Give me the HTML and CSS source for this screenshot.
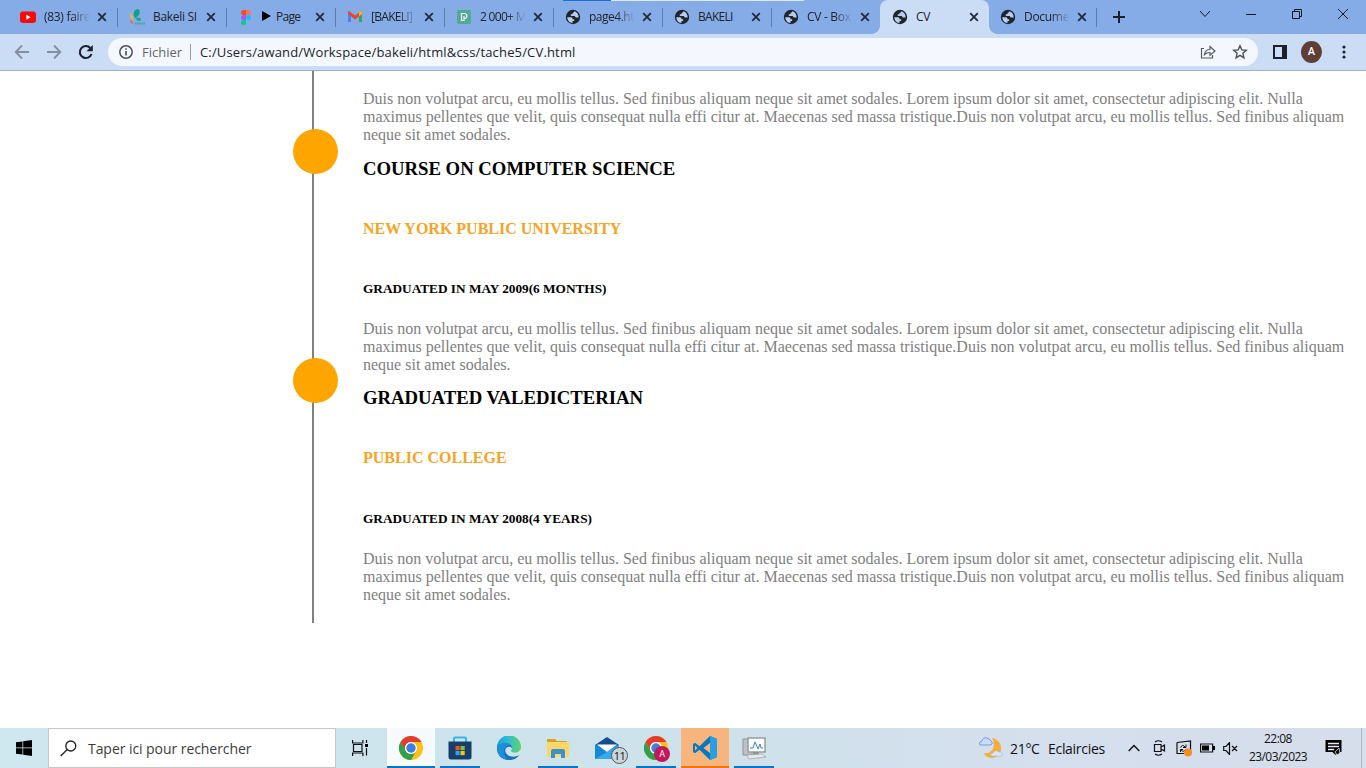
FILE: index.html
```html
<!DOCTYPE html>
<html lang="fr">
<head>
<meta charset="utf-8">
<title>CV</title>
<link rel="stylesheet" href="styles.css">
</head>
<body>
<svg class="defs" width="0" height="0">
  <symbol id="close" viewBox="0 0 16 16"><path d="M4.200 4.200l7.600 7.600M11.800 4.200l-7.600 7.600" stroke="#202a3c" stroke-width="1.800" fill="none"/></symbol>
  <symbol id="globe" viewBox="0 0 16 16"><circle cx="8" cy="8" r="7.200" fill="#20242b"/><path d="M2.300 8.200h3.500c1.700 0 1.700 1.200 1.700 2h1.700v1.700H7.500v2C4.500 13.900 2.300 11 2.300 8.200zM9.200 2.300c-.2 1.200-.7 1.700-1.700 1.700v1.200H5.800v1.700h3.500c1 0 1 1.700 2 1.700h2.400C13.700 5.500 12 3 9.200 2.300z" fill="#b7cdf1"/></symbol>
  <symbol id="chrome" viewBox="0 0 24 24"><circle cx="12" cy="12" r="12" fill="#fbc116"/><path d="M1.600 6A12 12 0 0 1 22.400 6H12a6 6 0 0 0-5.200 9z" fill="#e33b2e"/><path d="M1.600 6A12 12 0 0 0 12 24l5.200-9A6 6 0 0 1 6.800 15z" fill="#2da14c"/><circle cx="12" cy="12" r="6" fill="#fff"/><circle cx="12" cy="12" r="4.700" fill="#3c7de8"/></symbol>
</svg>

<header class="tabstrip">
  <div class="window-edge"></div>
  <div class="tab"><svg class="fav" viewBox="0 0 16 16"><rect y="2.500" width="16" height="11.500" rx="3" fill="#f80b0b"/><path d="M6.400 5.700v5l4.300-2.500z" fill="#fff"/></svg><span class="title t-faire">(83) faire</span><svg class="x"><use href="#close"/></svg></div>
  <div class="tab"><svg class="fav" viewBox="0 0 16 16"><path d="M6 9C3 5 5 0 9.500 0c2.500 3 1 7-3.500 9z" fill="#12a08a"/><path d="M6.500 9.500c3-2 6-.5 5.500 2-2 1-4 .5-5.500-2z" fill="#1ca591"/><path d="M1 4c3 1 4 4 3 8-2-2-4-5-3-8z" fill="#d9b55b"/><path d="M1 11c2 0 3 2 3 4-2 0-3-2-3-4z" fill="#e2694e"/><path d="M6 14.500h10" stroke="#42a699" stroke-width="2" stroke-dasharray="1.500 .6"/></svg><span class="title t-bakeli">Bakeli SI</span><svg class="x"><use href="#close"/></svg></div>
  <div class="tab"><svg class="fav" viewBox="0 0 16 16"><path d="M8 1H5.500a2.500 2.500 0 0 0 0 5H8z" fill="#f24e1e"/><path d="M8 1h2.500a2.500 2.500 0 0 1 0 5H8z" fill="#ff7262"/><path d="M8 6H5.500a2.500 2.500 0 0 0 0 5H8z" fill="#a259ff"/><circle cx="10.500" cy="8.500" r="2.500" fill="#1abcfe"/><path d="M8 11H5.500A2.500 2.500 0 1 0 8 13.500z" fill="#0acf83"/></svg><span class="title t-page"><svg class="play" viewBox="0 0 9 10"><path d="M0 0v10l9-5z"/></svg>Page</span><svg class="x"><use href="#close"/></svg></div>
  <div class="tab"><svg class="fav" viewBox="0 0 16 16"><path d="M1 4v9h3V6z" fill="#4285f4"/><path d="M12 6v7h3V4z" fill="#34a853"/><path d="M1 3.500c0-1 1-1.500 2-.8L8 6.500l5-3.800c1-.7 2-.2 2 .8V5L8 10.400 1 5z" fill="#ea4335"/><path d="M12 3.500l1-.8c1-.7 2-.2 2 .8V5l-3 2.300z" fill="#fbbc04"/></svg><span class="title t-mail">[BAKELI]</span><svg class="x"><use href="#close"/></svg></div>
  <div class="tab"><svg class="fav" viewBox="0 0 16 16"><rect x="1" y="1" width="14" height="14" rx="1.500" fill="#51ad92"/><path d="M5.500 4.500h3.500a2.600 2.600 0 0 1 0 5H8v2H5.500zM8 9.500V7" stroke="#fff" stroke-width="1.200" fill="none"/></svg><span class="title t-2000">2 000+ M</span><svg class="x"><use href="#close"/></svg></div>
  <div class="tab"><svg class="fav"><use href="#globe"/></svg><span class="title t-page4">page4.ht</span><svg class="x"><use href="#close"/></svg></div>
  <div class="tab"><svg class="fav"><use href="#globe"/></svg><span class="title t-bk">BAKELI</span><svg class="x"><use href="#close"/></svg></div>
  <div class="tab before-active"><svg class="fav"><use href="#globe"/></svg><span class="title t-box">CV - Box</span><svg class="x"><use href="#close"/></svg></div>
  <div class="tab active"><svg class="fav"><use href="#globe"/></svg><span class="title t-cv">CV</span><svg class="x"><use href="#close"/></svg></div>
  <div class="tab last"><svg class="fav"><use href="#globe"/></svg><span class="title t-doc">Docume</span><svg class="x"><use href="#close"/></svg></div>
  <svg class="plus" viewBox="0 0 12 12"><path d="M6 0v12M0 6h12" stroke="#1b212c" stroke-width="2"/></svg>
  <div class="controls">
    <svg viewBox="0 0 12 12"><path d="M1 3l5 5.500L11 3"/></svg>
    <svg viewBox="0 0 12 12"><path d="M1 6.500h10"/></svg>
    <svg viewBox="0 0 12 12"><path d="M1.500 3.500h7v7h-7zM3.500 3V1.500h7v7H9"/></svg>
    <svg viewBox="0 0 12 12"><path d="M1 1l10 10M11 1L1 11"/></svg>
  </div>
</header>

<nav class="toolbar">
  <svg class="nav-icon" viewBox="0 0 16 16"><path d="M15 8H2M8 1.500L1.700 8 8 14.500" stroke="#838fa3" stroke-width="1.800" fill="none"/></svg>
  <svg class="nav-icon" viewBox="0 0 16 16"><path d="M1 8h13M8 1.500L14.300 8 8 14.500" stroke="#838fa3" stroke-width="1.800" fill="none"/></svg>
  <svg class="nav-icon" viewBox="0 0 16 16"><path d="M13.500 10A6 6 0 1 1 12.300 4" stroke="#1b212c" stroke-width="2.100" fill="none"/><path d="M14.800 1v6.300H8.500z" fill="#1b212c"/></svg>
  <div class="omnibox">
    <svg class="info" viewBox="0 0 14 14"><circle cx="7" cy="7" r="6.200" stroke="#4d5159" stroke-width="1.500" fill="none"/><path d="M7 6v4.500M7 3.200v1.600" stroke="#4d5159" stroke-width="1.600"/></svg>
    <span class="scheme">Fichier</span>
    <span class="divider"></span>
    <span class="url">C:/Users/awand/Workspace/bakeli/html&amp;css/tache5/CV.html</span>
    <svg class="share" viewBox="0 0 16 16"><path d="M4 4.500H1.500v9.500h11v-3M4.500 10.500c.5-3.500 2.500-5 5.500-5V2.500l5 4.500-5 4.300V8.500c-2.500 0-4 .5-5.500 2z"/></svg>
    <svg class="star" viewBox="0 0 16 16"><path d="M8 1.800l1.800 4.100 4.500.4-3.400 3 1 4.400L8 11.400l-3.900 2.300 1-4.400-3.400-3 4.500-.4z"/></svg>
  </div>
  <svg class="panel" viewBox="0 0 14 14"><rect x="1" y="1" width="12" height="12" fill="none" stroke="#1b212c" stroke-width="2"/><path d="M9 1h4v12H9z" fill="#1b212c"/></svg>
  <span class="avatar">A</span>
  <svg class="menu" viewBox="0 0 4 14"><circle cx="2" cy="2" r="1.600"/><circle cx="2" cy="7" r="1.600"/><circle cx="2" cy="12" r="1.600"/></svg>
</nav>

<main class="page">
  <section class="timeline">
    <article class="entry first">
      <p>Duis non volutpat arcu, eu mollis tellus. Sed finibus aliquam neque sit amet sodales. Lorem ipsum dolor sit amet, consectetur adipiscing elit. Nulla<br>maximus pellentes que velit, quis consequat nulla effi citur at. Maecenas sed massa tristique.Duis non volutpat arcu, eu mollis tellus. Sed finibus aliquam<br>neque sit amet sodales.</p>
    </article>
    <article class="entry">
      <span class="dot"></span>
      <h3>COURSE ON COMPUTER SCIENCE</h3>
      <h4>NEW YORK PUBLIC UNIVERSITY</h4>
      <h5>GRADUATED IN MAY 2009(6 MONTHS)</h5>
      <p>Duis non volutpat arcu, eu mollis tellus. Sed finibus aliquam neque sit amet sodales. Lorem ipsum dolor sit amet, consectetur adipiscing elit. Nulla<br>maximus pellentes que velit, quis consequat nulla effi citur at. Maecenas sed massa tristique.Duis non volutpat arcu, eu mollis tellus. Sed finibus aliquam<br>neque sit amet sodales.</p>
    </article>
    <article class="entry">
      <span class="dot"></span>
      <h3>GRADUATED VALEDICTERIAN</h3>
      <h4>PUBLIC COLLEGE</h4>
      <h5 class="late">GRADUATED IN MAY 2008(4 YEARS)</h5>
      <p>Duis non volutpat arcu, eu mollis tellus. Sed finibus aliquam neque sit amet sodales. Lorem ipsum dolor sit amet, consectetur adipiscing elit. Nulla<br>maximus pellentes que velit, quis consequat nulla effi citur at. Maecenas sed massa tristique.Duis non volutpat arcu, eu mollis tellus. Sed finibus aliquam<br>neque sit amet sodales.</p>
    </article>
  </section>
</main>

<footer class="taskbar">
  <div class="start"><svg width="16" height="16" viewBox="0 0 16 16"><path d="M0 2.300l6.500-.9v6.200H0zM7.200 1.300L16 0v7.600H7.200zM0 8.300h6.500v6.300L0 13.700zM7.200 8.300H16V16l-8.800-1.300z"/></svg></div>
  <div class="search"><svg width="17" height="17" viewBox="0 0 17 17"><circle cx="10.800" cy="6" r="5" fill="none" stroke="#222" stroke-width="1.300"/><path d="M7.200 9.500L.7 16" stroke="#222" stroke-width="1.300"/></svg><span>Taper ici pour rechercher</span></div>
  <div class="taskview"><svg width="17" height="16" viewBox="0 0 17 16"><path d="M.6 0v3h10.300V0M.6 16v-3h10.300v3M1.500 4.500h8.500v7H1.500zM14.500 0v3M14.500 8v7.500" stroke="#111" stroke-width="1.200" fill="none"/><path d="M13 4h3v3h-3z"/></svg></div>
  <div class="app chrome-app"><svg width="24" height="24"><use href="#chrome"/></svg></div>
  <div class="app"><svg width="24" height="24" viewBox="0 0 24 24"><path d="M6 6V2.500Q6 1.500 7 1.500h10q1 0 1 1V6" stroke="#35b7e9" stroke-width="2" fill="none"/><path d="M.5 5.500h23V21q0 2.500-2.500 2.500H3Q.5 23.500.5 21z" fill="#173f69"/><path d="M7.500 10h4.200v4.200H7.500z" fill="#f15325"/><path d="M12.500 10h4.200v4.200h-4.200z" fill="#80c12f"/><path d="M7.500 15h4.200v4.200H7.500z" fill="#22a7f0"/><path d="M12.500 15h4.200v4.200h-4.200z" fill="#ffc01e"/></svg></div>
  <div class="app idle"><svg width="24" height="24" viewBox="0 0 24 24"><defs><linearGradient id="edge"><stop stop-color="#1c9fe0"/><stop offset=".5" stop-color="#33bfcf"/><stop offset="1" stop-color="#61d45c"/></linearGradient></defs><path d="M0 11.500A12 12 0 0 1 24 11c0 3.500-2.500 5.500-6 5.500-2.500 0-4-.8-4-1.600 0-.7 1-1 1-2.800C15 9 12.500 6.700 9 6.700c-4.500 0-8 2.300-9 4.800z" fill="url(#edge)"/><path d="M0 12c0-3 4-5.300 8.500-5.300 4 0 6.500 2.500 6.500 5.300-1.500-1.500-3.500-1.700-5-.8-2.500 1.600-2.500 5.800 1 8 3.500 2.200 8 1.700 11.300-.3C20.500 22 16.500 24 12 24 5 24 0 19 0 12z" fill="#1672bd"/><path d="M0 12c0-3 4-5.300 8.500-5.300 2.500 0 4.300.9 5.300 2.300C7 8 4.500 17 10.500 23.900 4.500 23.300 0 18.500 0 12z" fill="#1b8fd9"/></svg></div>
  <div class="app"><svg width="24" height="24" viewBox="0 0 24 24"><path d="M1 3h8l2 2h10v5H1z" fill="#d6a128"/><path d="M1 6h22v15H1z" fill="#fcd667"/><path d="M5 22v-7q0-2 2-2h10q2 0 2 2v7h-4v-4H9v4z" fill="#3c91cc"/></svg></div>
  <div class="app idle mail"><svg width="26" height="24" viewBox="0 0 26 24"><path d="M1 9l12-8 12 8z" fill="#124f8c"/><path d="M1 9h24v14H1z" fill="#1688d6"/><path d="M3 8.500h20L13 16z" fill="#fff"/><path d="M1 23L25 9v14z" fill="#35a9e9"/></svg><span class="badge">11</span></div>
  <div class="app profile"><svg width="24" height="24"><use href="#chrome"/></svg><span class="badge">A</span></div>
  <div class="app code"><svg width="24" height="24" viewBox="0 0 24 24"><path d="M17 0l7 3v18l-7 3L6.500 13.800 2 17.300 0 16V8l2-1.300 4.500 3.500zM17 7l-6.500 5 6.500 5z" fill="#0877bb"/><path d="M17 0l7 3v18l-7 3z" fill="#25a0e4"/><path d="M2 9.500v5l2.500-2.500z" fill="#f7b57d"/></svg></div>
  <div class="app"><svg width="25" height="24" viewBox="0 0 25 24"><path d="M1 3h9v16H1z" fill="#bcc2c5" stroke="#8c9295"/><path d="M6 2h17v14H6z" fill="#fff" stroke="#969da0" stroke-width="1.500"/><path d="M8 12h3l2-6 3 7 2-5 1 4h2" fill="none" stroke="#3688b1"/><path d="M11 16h6v3h-6z" fill="#8e969a"/><path d="M5 19l15-1 4 3-17 2z" fill="#e7eaeb" stroke="#9ba1a3" stroke-width=".7"/></svg></div>
  <div class="tray">
    <svg class="weather" width="25" height="24" viewBox="0 0 25 24"><path d="M14 2c6 1 10 6 9 12-1 7-9 10-15 6-1-1-2-2-2-3 7 2 13-6 8-15z" fill="#f8ad35"/><path d="M2 9q-2-3 2-4 1-4 5-3 3 1 4 3 3 2 0 4z" fill="#c9dcfb" stroke="#769bdc"/><path d="M13 20q-1-3 2-3 2-4 6-1 4 0 3 4z" fill="#d8e5fa" stroke="#98b2de" stroke-width=".6"/></svg>
    <span class="temp">21°C</span><span class="sky">Eclaircies</span>
    <svg class="up" width="12" height="8" viewBox="0 0 12 8"><path d="M.7 7L6 1.500 11.300 7" fill="none" stroke="#111" stroke-width="1.400"/></svg>
    <svg class="cam" width="13" height="16" viewBox="0 0 13 16"><path d="M1.500 4.500h6.500v7H1.500zM8 7l3.500-2v6L8 9M2 2q3.500-2.500 7 0M2 14q3.500 2.500 7 0" fill="none" stroke="#111" stroke-width="1.200"/></svg>
    <svg class="sync" width="17" height="17" viewBox="0 0 17 17"><path d="M2 2.500L15.500 1v12M2 2.500v11h7" fill="none" stroke="#111" stroke-width="1.200"/><path d="M5.500 7.500q2-4 5 0M11 4.500v3H8M11 9q-2 4-5 1M5.500 12V9.500H8" fill="none" stroke="#111"/><circle cx="13" cy="12.500" r="4" fill="#fa8d1e"/></svg>
    <svg class="battery" width="15" height="10" viewBox="0 0 15 10"><path d="M.6 1h12v8H.6z" fill="none" stroke="#111" stroke-width="1.200"/><path d="M2 2.500h7v5H2zM13 3h2v4h-2z"/></svg>
    <svg class="sound" width="15" height="13" viewBox="0 0 15 13"><path d="M.7 4.500H3l3.500-4v12l-3.500-4H.7zM9 4l5 5M14 4L9 9" fill="none" stroke="#111" stroke-width="1.200"/></svg>
    <div class="clock"><span>22:08</span><span class="date">23/03/2023</span></div>
    <svg class="note" width="17" height="16" viewBox="0 0 17 16"><path d="M.5 0h16v12H12l-1.500 3-3-3h-7z"/><path d="M3 3.500h11M3 6.500h11M3 9.500h6" stroke="#e3e8f2" stroke-width="1.300"/><path d="M10 12l4-4 1 5-3 2z" fill="#111" stroke="#d7dfeb" stroke-width=".8"/></svg>
    <span class="desktop-edge"></span>
  </div>
</footer>
</body>
</html>
```
FILE: styles.css
```css
* { box-sizing: border-box; }
body { margin: 0; width: 1366px; height: 768px; overflow: hidden; display: flex; flex-direction: column; background: #fff; font-family: "Open Sans", sans-serif; color: #20242b; }
.defs { position: absolute; }
svg { flex: none; display: block; }

.tabstrip { position: relative; height: 34px; flex: none; display: flex; background: #86ace8; padding-left: 8px; }
.window-edge { position: absolute; left: 563px; top: 0; width: 241px; height: 1px; background: linear-gradient(90deg, #1a72cf 48px, #dce9f5 48px); }
.tab { width: 109px; height: 34px; flex: none; display: flex; align-items: center; padding: 0 7px 0 12px; position: relative; }
.tab::after { content: ""; position: absolute; right: -1px; top: 8px; width: 1px; height: 19px; background: #5d7db0; }
.fav { width: 16px; height: 16px; margin-right: 8px; }
.title { width: 46px; height: 18px; line-height: 18px; font-size: 12px; letter-spacing: -.3px; white-space: nowrap; overflow: hidden; flex: none; -webkit-mask-image: linear-gradient(90deg, #000 60%, transparent); mask-image: linear-gradient(90deg, #000 60%, transparent); }
.x { width: 16px; height: 16px; margin-left: 4px; }
.t-bakeli, .t-page, .t-bk, .t-cv { -webkit-mask-image: none; mask-image: none; }
.t-bk, .t-mail { letter-spacing: -.7px; }
.t-2000 { letter-spacing: -.7px; }
.t-page4 { letter-spacing: -.5px; }
.t-page { letter-spacing: -.7px; }
.play { display: inline-block; width: 9px; height: 10px; margin-right: 5px; }
.before-active::after, .active::after { display: none; }
.active { background: #cbdcf5; border-radius: 8px 8px 0 0; }
.active::before { content: ""; position: absolute; left: -8px; right: -8px; bottom: 0; height: 8px; background: radial-gradient(circle at 0 0, transparent 7.500px, #cbdcf5 8px) left / 8px 8px no-repeat, radial-gradient(circle at 100% 0, transparent 7.500px, #cbdcf5 8px) right / 8px 8px no-repeat; }
.last { width: 107px; padding: 0 6px 0 11px; }
.plus { width: 12px; height: 12px; margin: 11px 0 0 17px; }
.controls { margin-left: auto; display: flex; gap: 34px; padding: 8px 17px 0 0; }
.controls svg { width: 12px; height: 12px; fill: none; stroke: #141a25; stroke-width: 1; }

.toolbar { height: 37px; flex: none; display: flex; align-items: center; background: #cbdcf5; border-bottom: 1px solid #a0adc5; padding: 0 20px 0 14px; }
.nav-icon { width: 16px; height: 16px; margin-right: 16px; }
.omnibox { width: 1150px; height: 28px; margin-left: -2px; flex: none; border-radius: 14px; background: #f4f7fd; display: flex; align-items: center; padding: 0 10px 0 11px; }
.info { width: 14px; height: 14px; margin-right: 9px; }
.scheme { width: 41px; font-size: 13px; color: #64676d; }
.divider { width: 1px; height: 16px; margin: 0 9px 0 7px; background: #989da6; }
.url { font-size: 13px; letter-spacing: .16px; white-space: nowrap; }
.share { width: 16px; height: 16px; margin-left: auto; margin-right: 16px; fill: none; stroke: #555a63; stroke-width: 1.200; }
.star { width: 16px; height: 16px; fill: none; stroke: #4b5059; stroke-width: 1.400; }
.panel { width: 14px; height: 14px; margin-left: 15px; }
.avatar { width: 22px; height: 22px; margin-left: 14px; border-radius: 50%; background: #5e4037; color: #fff; font: 500 11px/22px Roboto, sans-serif; text-align: center; }
.menu { width: 4px; height: 14px; margin-left: 20px; fill: #20242b; }

.page { flex: 1; padding-left: 312px; font-family: "Liberation Serif", serif; color: #000; }
.timeline { height: 552px; border-left: 2px solid #808080; padding: 19px 0 0 49px; }
.entry { position: relative; height: 229px; }
.entry.first { height: 54px; }
.entry p { margin: 0; font-size: 16px; line-height: 18px; color: #808080; white-space: nowrap; }
.entry h3, .entry h4, .entry h5 { margin: 0; white-space: nowrap; }
.entry h3 { padding-top: 14px; font-size: 18.720px; line-height: 22px; }
.entry h4 { padding-top: 40px; font-size: 16px; line-height: 18px; color: #f5a425; }
.entry h5 { padding-top: 43px; margin-bottom: 24px; font-size: 13.280px; line-height: 15px; }
.entry h5.late { padding-top: 44px; }
.dot { position: absolute; left: -70px; top: -15px; width: 45px; height: 45px; border-radius: 50%; background: #ffa500; }

.taskbar { height: 40px; flex: none; display: flex; background: linear-gradient(90deg, #cfe7ef 0, #cde2ea 50%, #d4dfed 72%, #d6ddeb 100%); color: #111; }
.start { width: 48px; display: flex; align-items: center; justify-content: center; }
.search { width: 288px; background: #fff; border: 1px solid #c4c8ca; display: flex; align-items: center; padding-left: 11px; gap: 11px; font-size: 14px; letter-spacing: -.06px; color: #3c3c3c; white-space: nowrap; }
.taskview { width: 51px; display: flex; align-items: center; padding-left: 16px; }
.app { width: 40px; height: 40px; margin-right: 9px; display: flex; align-items: center; justify-content: center; position: relative; border-bottom: 2px solid #0b74ca; padding-top: 2px; flex: none; }
.app.idle { border-color: transparent; }
.chrome-app { width: 48px; margin-right: 5px; background: #f6fafc; }
.badge { position: absolute; left: 24px; top: 19px; width: 17px; height: 17px; border: 1px solid #4d565c; border-radius: 50%; background: #cdd5da; font-size: 11px; line-height: 15px; text-align: center; letter-spacing: -.5px; }
.profile .badge { left: 18px; top: 18px; width: 16px; height: 16px; border: 0; background: #c2185b; color: #fff; font: 9px/16px Roboto, sans-serif; }
.profile { margin-right: 5px; }
.code { width: 48px; margin-right: 5px; background: #f7b57d; border-color: #f57410; }
.tray { margin-left: auto; display: flex; align-items: center; font-size: 14px; letter-spacing: -.3px; white-space: nowrap; }
.temp { width: 32px; margin-left: 7px; }
.sky { width: 56px; margin-left: 6px; }
.up { margin-left: 24px; }
.cam { margin-left: 13px; }
.sync { margin-left: 9px; }
.battery { margin-left: 8px; }
.sound { margin-left: 8px; }
.clock { width: 60px; margin-left: 10px; display: flex; flex-direction: column; align-items: center; font-size: 12px; line-height: 18px; letter-spacing: -.55px; }
.note { margin-left: 17px; }
.desktop-edge { width: 5px; height: 40px; margin-left: 19px; border-left: 1px solid #aeb7c4; }
```
